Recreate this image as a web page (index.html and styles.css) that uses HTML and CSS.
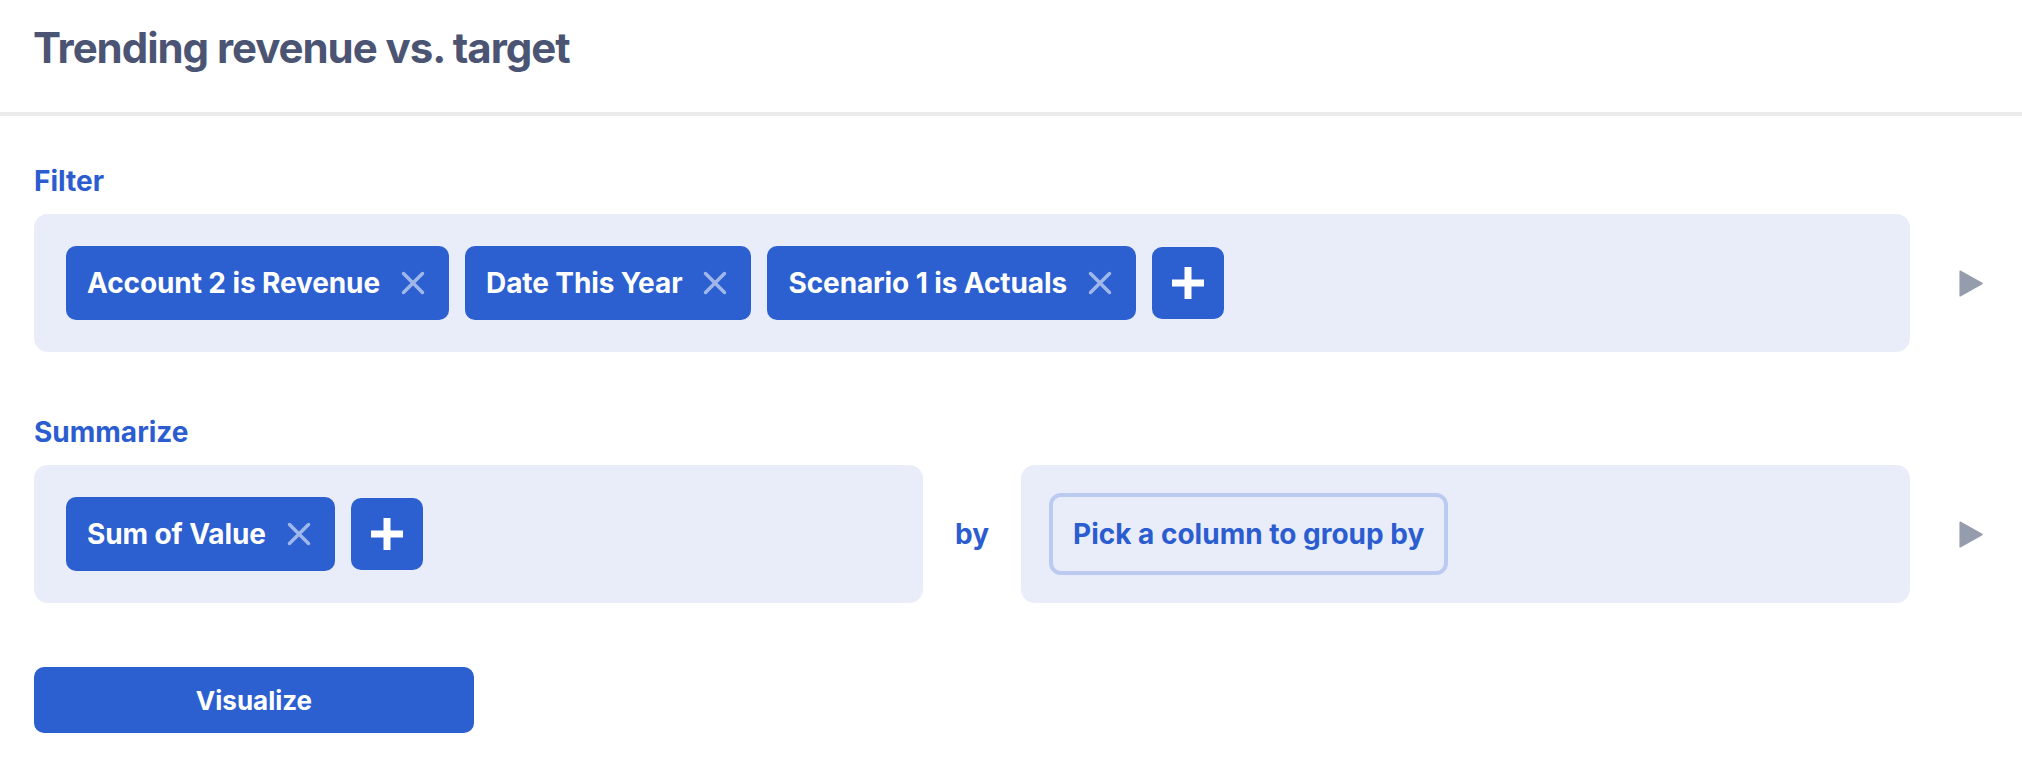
FILE: index.html
```html
<!DOCTYPE html>
<html lang="en">
<head>
<meta charset="utf-8">
<title>Trending revenue vs. target</title>
<link rel="stylesheet" href="styles.css">
</head>
<body>
<header class="header">
  <h1 class="title">Trending revenue vs. target</h1>
</header>
<main class="content">
  <section class="section">
    <h2 class="label">Filter</h2>
    <div class="row">
      <div class="panel">
        <div class="chip"><span class="chip-text">Account 2 is Revenue</span><svg class="chip-x" viewBox="0 0 24 24"><path d="M2.5 2.5L21.5 21.5M21.5 2.5L2.5 21.5"/></svg></div>
        <div class="chip"><span class="chip-text">Date This Year</span><svg class="chip-x" viewBox="0 0 24 24"><path d="M2.5 2.5L21.5 21.5M21.5 2.5L2.5 21.5"/></svg></div>
        <div class="chip"><span class="chip-text">Scenario 1 is Actuals</span><svg class="chip-x" viewBox="0 0 24 24"><path d="M2.5 2.5L21.5 21.5M21.5 2.5L2.5 21.5"/></svg></div>
        <button class="add"><svg viewBox="0 0 32 32"><path d="M16 0V32M0 16H32"/></svg></button>
      </div>
      <button class="run"><svg viewBox="0 0 24 27"><path d="M1.2 1.2L23 13.5L1.2 25.8Z"/></svg></button>
    </div>
  </section>
  <section class="section">
    <h2 class="label">Summarize</h2>
    <div class="row row-split">
      <div class="panel">
        <div class="chip"><span class="chip-text">Sum of Value</span><svg class="chip-x" viewBox="0 0 24 24"><path d="M2.5 2.5L21.5 21.5M21.5 2.5L2.5 21.5"/></svg></div>
        <button class="add"><svg viewBox="0 0 32 32"><path d="M16 0V32M0 16H32"/></svg></button>
      </div>
      <div class="by">by</div>
      <div class="panel panel-group">
        <button class="picker">Pick a column to group by</button>
      </div>
      <button class="run"><svg viewBox="0 0 24 27"><path d="M1.2 1.2L23 13.5L1.2 25.8Z"/></svg></button>
    </div>
  </section>
  <div class="actions">
    <button class="visualize">Visualize</button>
  </div>
</main>
</body>
</html>
```
FILE: styles.css
```css
* { box-sizing: border-box; }
html, body { margin: 0; padding: 0; background: #ffffff; }
body {
  font-family: "Inter", "Noto Sans", "Liberation Sans", sans-serif;
  color: #4b5573;
}
button { font-family: inherit; border: none; cursor: pointer; }

.header {
  height: 116px;
  padding: 23px 34px 0 33px;
  border-bottom: 4px solid #ebebeb;
}
.title {
  margin: 0;
  font-size: 42px;
  line-height: 50px;
  font-weight: 700;
  letter-spacing: -0.025em;
  color: #4b5573;
}

.content {
  padding: 49px 39px 0 34px;
  display: flex;
  flex-direction: column;
  gap: 64px;
}
.section { display: flex; flex-direction: column; gap: 17px; }
.label {
  margin: 0;
  font-size: 28px;
  line-height: 32px;
  font-weight: 700;
  color: #2b5dd0;
}

.row {
  display: grid;
  grid-template-columns: minmax(0, 1fr) 73px;
  align-items: center;
}
.row-split {
  grid-template-columns: minmax(0, 1fr) 98px minmax(0, 1fr) 73px;
}
.panel {
  min-height: 138px;
  background: #e9edf9;
  border-radius: 14px;
  padding: 0 32px;
  display: flex;
  align-items: center;
  gap: 16px;
}
.panel-group { padding: 0 28px; }

.chip {
  height: 74px;
  background: #2c5fcf;
  border-radius: 10px;
  padding: 0 24px 0 21px;
  display: flex;
  align-items: center;
  gap: 21px;
}
.chip-text {
  font-size: 28px;
  font-weight: 700;
  letter-spacing: -0.1px;
  color: #ffffff;
  white-space: nowrap;
}
.chip-x { width: 24px; height: 24px; }
.chip-x path {
  fill: none;
  stroke: rgba(255, 255, 255, 0.55);
  stroke-width: 3.5;
  stroke-linecap: round;
}

.add {
  width: 72px;
  height: 72px;
  background: #2c5fcf;
  border-radius: 10px;
  display: flex;
  align-items: center;
  justify-content: center;
  padding: 0;
}
.add svg { width: 32px; height: 32px; }
.add path { stroke: #ffffff; stroke-width: 7; fill: none; }

.run {
  justify-self: end;
  width: 24px;
  height: 27px;
  padding: 0;
  background: none;
  display: flex;
}
.run svg { width: 24px; height: 27px; }
.run path { fill: #959cac; stroke: #959cac; stroke-width: 1.5; stroke-linejoin: round; }

.by {
  text-align: center;
  font-size: 28px;
  font-weight: 700;
  color: #2b5dd0;
}

.picker {
  height: 82px;
  padding: 0 20px;
  border: 4px solid #bacaf0;
  border-radius: 12px;
  background: transparent;
  font-size: 28px;
  font-weight: 700;
  color: #2b5dd0;
}

.visualize {
  width: 440px;
  height: 66px;
  background: #2c5fcf;
  border-radius: 10px;
  color: #ffffff;
  font-size: 26px;
  font-weight: 700;
}
```
